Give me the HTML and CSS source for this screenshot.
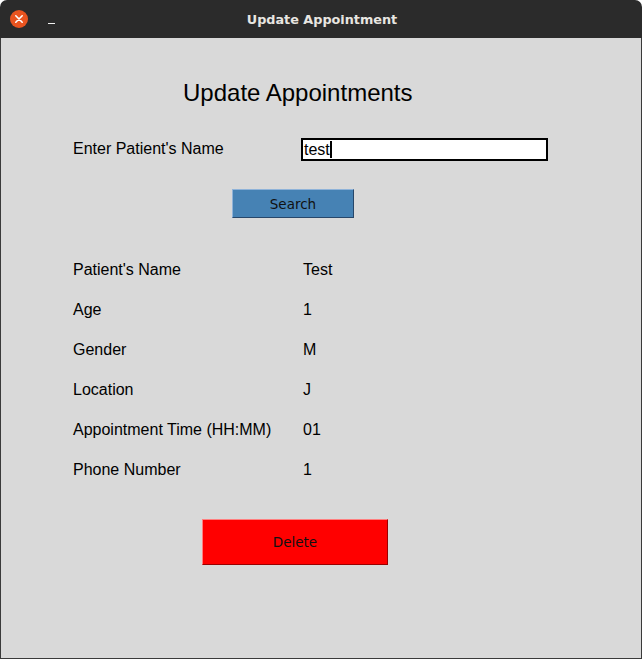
FILE: index.html
```html
<!DOCTYPE html>
<html>
<head>
<meta charset="utf-8">
<link rel="stylesheet" href="styles.css">
</head>
<body>
<div class="window">
  <div class="titlebar">
    <div class="controls">
      <span class="close">
        <svg width="18" height="18" viewBox="0 0 18 18"><circle cx="9" cy="9" r="9" fill="#e95420"/><path d="M5.8 5.8 L12.2 12.2 M12.2 5.8 L5.8 12.2" stroke="#fff" stroke-width="1.6" stroke-linecap="round"/></svg>
      </span>
      <span class="minimize"></span>
    </div>
    <div class="title">Update Appointment</div>
  </div>
  <div class="content">
    <h1 class="heading">Update Appointments</h1>
    <div class="row entry-row">
      <span class="label">Enter Patient's Name</span>
      <div class="entry"><span class="entry-text">test</span><span class="caret"></span></div>
    </div>
    <div class="btn-wrap search-wrap"><button class="btn search">Search</button></div>
    <div class="details">
      <div class="row"><span class="label">Patient's Name</span><span class="value">Test</span></div>
      <div class="row"><span class="label">Age</span><span class="value">1</span></div>
      <div class="row"><span class="label">Gender</span><span class="value">M</span></div>
      <div class="row"><span class="label">Location</span><span class="value">J</span></div>
      <div class="row"><span class="label">Appointment Time (HH:MM)</span><span class="value">01</span></div>
      <div class="row"><span class="label">Phone Number</span><span class="value">1</span></div>
    </div>
    <div class="btn-wrap delete-wrap"><button class="btn delete">Delete</button></div>
  </div>
</div>
</body>
</html>
```

FILE: styles.css
```css
html, body {
  margin: 0;
  padding: 0;
  background: #ffffff;
}
.window {
  width: 642px;
  height: 659px;
  display: flex;
  flex-direction: column;
  font-family: "Liberation Sans", Arial, sans-serif;
  color: #000;
}
.titlebar {
  height: 38px;
  background: #2b2b2b;
  border-radius: 7px 7px 0 0;
  position: relative;
  display: flex;
  align-items: center;
  justify-content: center;
  flex-shrink: 0;
}
.controls {
  position: absolute;
  left: 10px;
  top: 10px;
  display: flex;
  align-items: center;
}
.close {
  width: 18px;
  height: 18px;
  display: block;
}
.close svg { display: block; }
.minimize {
  display: block;
  width: 7px;
  height: 1px;
  background: #f0f0f0;
  margin-left: 20px;
  margin-top: 9px;
}
.title {
  font-family: "DejaVu Sans", sans-serif;
  font-weight: bold;
  font-size: 12.8px;
  color: #e8e6e1;
  margin-left: 2px;
}
.content {
  flex: 1;
  background: #d9d9d9;
  border: 1px solid #3a3a3a;
  border-top: none;
  padding-left: 72px;
  display: flex;
  flex-direction: column;
}
.heading {
  margin: 0;
  margin-top: 40px;
  margin-left: 110px;
  font-weight: normal;
  font-size: 24px;
  height: 30px;
  line-height: 30px;
}
.row {
  display: flex;
  align-items: center;
  height: 40px;
  font-size: 16px;
}
.label {
  width: 230px;
  flex-shrink: 0;
}
.entry-row {
  margin-top: 21px;
  height: 40px;
}
.entry {
  margin-left: -2px;
  width: 242px;
  height: 19px;
  background: #fff;
  border: 2px solid #000;
  display: flex;
  align-items: center;
  padding-left: 1px;
  box-sizing: content-box;
}
.entry-text {
  font-size: 16px;
  line-height: 19px;
}
.caret {
  display: block;
  width: 2px;
  height: 17px;
  background: #000;
}
.btn-wrap {
  display: flex;
}
.search-wrap {
  margin-top: 20px;
  margin-left: 159px;
}
.btn {
  font-family: "DejaVu Sans", sans-serif;
  font-size: 13.5px;
  color: #111;
  padding: 0;
  cursor: pointer;
}
.search {
  width: 122px;
  height: 29px;
  background: #4682b4;
  border: 1px solid;
  border-color: #8fb3d9 #27476a #27476a #8fb3d9;
}
.details {
  margin-top: 32px;
}
.delete-wrap {
  margin-top: 29px;
  margin-left: 129px;
}
.delete {
  width: 186px;
  height: 46px;
  background: #ff0000;
  border: 1px solid;
  border-color: #ff7f7f #9a0000 #9a0000 #ff7f7f;
}
```
